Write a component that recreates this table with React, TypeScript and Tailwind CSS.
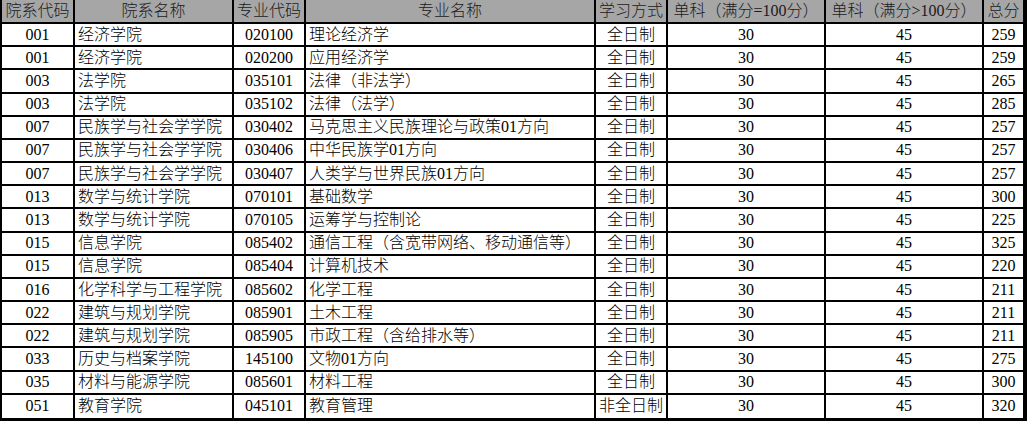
const headers = [
  "院系代码",
  "院系名称",
  "专业代码",
  "专业名称",
  "学习方式",
  "单科（满分=100分）",
  "单科（满分>100分）",
  "总分",
];

type Row = [string, string, string, string, string, string, string, string];

const rows: Row[] = [
  ["001", "经济学院", "020100", "理论经济学", "全日制", "30", "45", "259"],
  ["001", "经济学院", "020200", "应用经济学", "全日制", "30", "45", "259"],
  ["003", "法学院", "035101", "法律（非法学）", "全日制", "30", "45", "265"],
  ["003", "法学院", "035102", "法律（法学）", "全日制", "30", "45", "285"],
  ["007", "民族学与社会学学院", "030402", "马克思主义民族理论与政策01方向", "全日制", "30", "45", "257"],
  ["007", "民族学与社会学学院", "030406", "中华民族学01方向", "全日制", "30", "45", "257"],
  ["007", "民族学与社会学学院", "030407", "人类学与世界民族01方向", "全日制", "30", "45", "257"],
  ["013", "数学与统计学院", "070101", "基础数学", "全日制", "30", "45", "300"],
  ["013", "数学与统计学院", "070105", "运筹学与控制论", "全日制", "30", "45", "225"],
  ["015", "信息学院", "085402", "通信工程（含宽带网络、移动通信等）", "全日制", "30", "45", "325"],
  ["015", "信息学院", "085404", "计算机技术", "全日制", "30", "45", "220"],
  ["016", "化学科学与工程学院", "085602", "化学工程", "全日制", "30", "45", "211"],
  ["022", "建筑与规划学院", "085901", "土木工程", "全日制", "30", "45", "211"],
  ["022", "建筑与规划学院", "085905", "市政工程（含给排水等）", "全日制", "30", "45", "211"],
  ["033", "历史与档案学院", "145100", "文物01方向", "全日制", "30", "45", "275"],
  ["035", "材料与能源学院", "085601", "材料工程", "全日制", "30", "45", "300"],
  ["051", "教育学院", "045101", "教育管理", "非全日制", "30", "45", "320"],
];

// columns 1 and 3 (院系名称, 专业名称) are left aligned, the rest centered
const leftCols = [1, 3];

export default function App() {
  return (
    <div className="w-[1027px] h-[421px] bg-white">
      <div className="grid grid-cols-[73px_159px_72px_290px_72px_158px_158px_39px] grid-rows-[24px_repeat(17,minmax(0,1fr))] h-[421px] border-l-2 border-r-[4px] border-b-[3px] border-black font-['Liberation_Serif','Noto_Sans_CJK_SC',serif] font-light text-[16px] leading-none text-black">
        {headers.map((h, i) => (
          <div
            key={h}
            className={
              "flex items-center justify-center bg-[#a6a6a6] text-[#1a1a1a] whitespace-nowrap overflow-hidden border-b-2 border-black " +
              (i < 7 ? "border-r-2" : "")
            }
          >
            {h}
          </div>
        ))}
        {rows.map((row, r) =>
          row.map((cell, i) => (
            <div
              key={r + "-" + i}
              className={
                "flex items-center whitespace-nowrap overflow-hidden border-black " +
                (r < rows.length - 1 ? "border-b-2 " : "") +
                (i < 7 ? "border-r-2 " : "") +
                (leftCols.includes(i) ? "justify-start pl-[3px]" : "justify-center")
              }
            >
              {cell}
            </div>
          ))
        )}
      </div>
    </div>
  );
}
